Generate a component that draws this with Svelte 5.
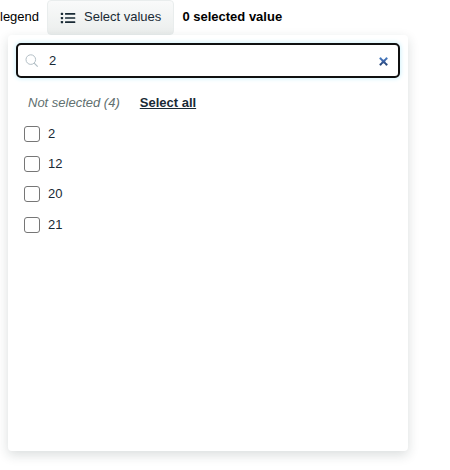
<script>
  const values = ['2', '12', '20', '21'];
  let query = $state('2');
  let checked = $state([]);
  const shown = $derived(values.filter((v) => v.includes(query)));
</script>

<main>
  <header>
    <span class="legend">legend</span>
    <button class="trigger" type="button">
      <svg width="16" height="12" viewBox="0 0 16 12" aria-hidden="true">
        <g fill="#192a35">
          <rect x="0.8" y="0.8" width="2.3" height="2.3" rx="0.6" />
          <rect x="0.8" y="4.9" width="2.3" height="2.3" rx="0.6" />
          <rect x="0.8" y="9" width="2.3" height="2.3" rx="0.6" />
          <rect x="5" y="1.1" width="10.3" height="1.6" rx="0.5" />
          <rect x="5" y="5.2" width="10.3" height="1.6" rx="0.5" />
          <rect x="5" y="9.3" width="10.3" height="1.6" rx="0.5" />
        </g>
      </svg>
      <span>Select values</span>
    </button>
    <strong>{checked.length} selected value</strong>
  </header>

  <section class="panel">
    <div class="search">
      <svg width="14" height="14" viewBox="0 0 14 14" fill="none" stroke="#b3bfc6" aria-hidden="true">
        <circle cx="5.8" cy="5.6" r="4.8" />
        <path d="M9.2 9.1 L12.7 12.6" stroke-width="1.3" />
      </svg>
      <input type="search" bind:value={query} aria-label="Search" />
    </div>

    <div class="group">
      <em>Not selected ({shown.length})</em>
      <button type="button" class="all" onclick={() => (checked = [...shown])}>Select all</button>
    </div>

    <ul>
      {#each shown as v (v)}
        <li>
          <label><input type="checkbox" value={v} bind:group={checked} /><span>{v}</span></label>
        </li>
      {/each}
    </ul>
  </section>
</main>

<style>
  :global(body) {
    margin: 0;
    background: #fff;
    overflow: hidden;
  }
  main {
    width: 450px;
    height: 470px;
    font: 13px/16px 'Liberation Sans', Arial, sans-serif;
    color: #192a35;
  }
  header {
    display: flex;
    align-items: center;
    height: 35px;
    color: #000;
  }
  .legend {
    width: 47px;
    padding-bottom: 2px;
    box-sizing: border-box;
  }
  .trigger {
    display: flex;
    align-items: center;
    gap: 8px;
    box-sizing: border-box;
    width: 127px;
    height: 35px;
    margin: 0;
    padding: 0 0 1px 12px;
    border: 1px solid #e9eded;
    border-radius: 4px;
    background: linear-gradient(#f9fafa, #ebeeed);
    font: inherit;
    color: #192a35;
    white-space: nowrap;
  }
  .trigger svg {
    margin-top: 2px;
  }
  strong {
    margin-left: 8.4px;
    padding-bottom: 2px;
  }
  .panel {
    position: relative;
    box-sizing: border-box;
    width: 400px;
    height: 416px;
    margin-left: 8px;
    padding: 8px;
    border-radius: 4px;
    background: #fff;
    box-shadow: 0 4px 12px rgba(25, 42, 43, 0.16);
  }
  .search {
    display: flex;
    align-items: center;
    box-sizing: border-box;
    height: 35px;
    padding: 0 7px;
    border: 2px solid #101010;
    border-radius: 5px;
    background: #fff;
    box-shadow: 0 0 4px 1px #d3f3fc;
  }
  .search svg {
    flex: none;
  }
  .search input {
    flex: 1;
    min-width: 0;
    margin: 0 0 0 10px;
    padding: 0;
    border: 0;
    outline: 0;
    background: none;
    font: inherit;
    color: #192a35;
  }
  .search input::-webkit-search-cancel-button {
    opacity: 1;
    pointer-events: auto;
    transform: translateY(1px);
  }
  .group {
    display: flex;
    gap: 20px;
    padding: 17px 0 0 12px;
  }
  em {
    color: #61706f;
  }
  .all {
    padding: 0;
    border: 0;
    background: none;
    font: bold 13px/16px 'Liberation Sans', Arial, sans-serif;
    color: #192a35;
    text-decoration: underline;
  }
  ul {
    margin: 8px 0 0;
    padding: 0 8px;
    list-style: none;
  }
  li {
    height: 30.2px;
  }
  label {
    display: flex;
    align-items: center;
    height: 30px;
  }
  label input {
    appearance: none;
    box-sizing: border-box;
    width: 16px;
    height: 16px;
    margin: 0 8px 0 0;
    border: 1px solid #767676;
    border-radius: 3px;
    background: #fff;
  }
  label input:checked {
    background: #192a35;
  }
</style>
